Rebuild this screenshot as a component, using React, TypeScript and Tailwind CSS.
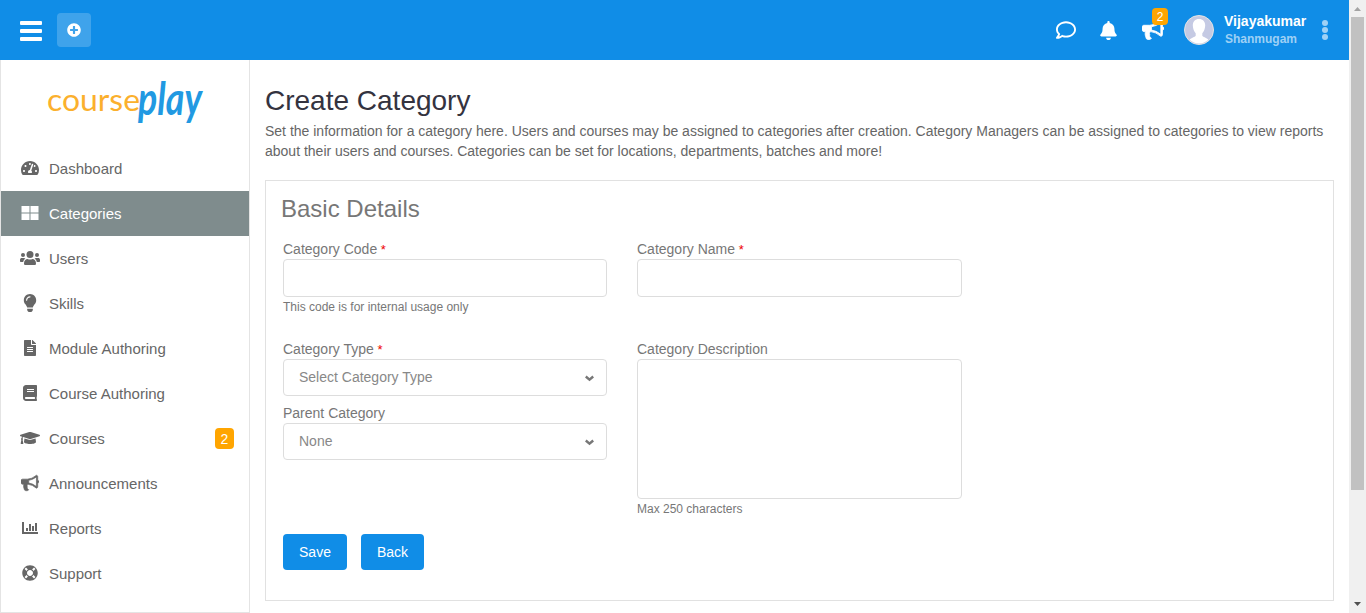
import type { ReactNode } from 'react';
import {
  FaPlusCircle, FaRegComment, FaBell, FaTachometerAlt, FaLightbulb,
  FaFileAlt, FaBook, FaGraduationCap, FaLifeRing,
} from 'react-icons/fa';

function Bullhorn({ size }: { size: number }) {
  return (
    <svg width={size} height={size} viewBox="0 0 1792 1792" fill="currentColor" stroke="currentColor" strokeWidth="70">
      <path d="M1664 640q53 0 90.5 37.5t37.5 90.5-37.5 90.5-90.5 37.5v384q0 52-38 90t-90 38q-417-347-812-380-58 19-91 66t-31 100.5 40 92.5q-20 33-23 65.500t6 58 33.500 55 48 50 61.500 50.500q-29 58-111.500 83t-168.500 11.500-132-55.500q-7-23-29.500-87.500t-32-94.500-23-89-15-101 3.500-98.500 22-110.500h-122q-66 0-113-47t-47-113v-192q0-66 47-113t113-47h480q435 0 896-384 52 0 90 38t38 90v384zm-128 604v-954q-394 302-768 343v270q377 42 768 341z" />
    </svg>
  );
}

function BarChart() {
  return (
    <svg width="18" height="16" viewBox="0 0 18 16" fill="currentColor">
      <path d="M1 2h2v10h14v2H1zM5 8h2v3H5zM8 4h2v7H8zM11 6h2v5h-2zM14 3h2v8h-2z" />
    </svg>
  );
}

function Windows() {
  return (
    <svg width="18" height="14" viewBox="0 0 18 14" fill="currentColor">
      <path d="M.5 0h8v6.500h-8zM9.500 0h8v6.500h-8zM.5 7.500h8V14h-8zM9.500 7.500h8V14h-8z" />
    </svg>
  );
}

function Users() {
  return (
    <svg width="20" height="14" viewBox="0 0 20 14" fill="currentColor">
      <circle cx="10" cy="3.500" r="3.500" />
      <circle cx="3" cy="4" r="2" />
      <circle cx="17" cy="4" r="2" />
      <path d="M4 12.500c0-2.800 1.600-4.500 3.600-4.500 1.500.8 3.300.8 4.800 0 2 0 3.600 1.700 3.600 4.500 0 1-.6 1.500-1.500 1.500h-9C4.600 14 4 13.500 4 12.500zM0 9c0-1.400.8-2 2-2h2c.6 0 1.100.2 1.400.5C4.200 8.200 3.400 9.500 3.200 11H1c-.6 0-1-.4-1-1zM20 9c0-1.400-.8-2-2-2h-2c-.6 0-1.100.2-1.400.5 1.200.7 2 2 2.200 3.500H19c.6 0 1-.4 1-1z" />
    </svg>
  );
}

const items: { label: string; icon: ReactNode; active?: boolean; badge?: string }[] = [
  { label: 'Dashboard', icon: <FaTachometerAlt size={18} /> },
  { label: 'Categories', icon: <Windows />, active: true },
  { label: 'Users', icon: <Users /> },
  { label: 'Skills', icon: <FaLightbulb size={18} /> },
  { label: 'Module Authoring', icon: <FaFileAlt size={16} /> },
  { label: 'Course Authoring', icon: <FaBook size={16} /> },
  { label: 'Courses', icon: <FaGraduationCap size={20} />, badge: '2' },
  { label: 'Announcements', icon: <Bullhorn size={18} /> },
  { label: 'Reports', icon: <BarChart /> },
  { label: 'Support', icon: <FaLifeRing size={16} /> },
];

function Header() {
  return (
    <header className="flex h-[60px] shrink-0 items-center bg-[#108de7] text-white">
      <button className="mt-0.5 ml-5 flex w-[22px] flex-col gap-1">
        <span className="h-1 rounded-[1px] bg-white" />
        <span className="h-1 rounded-[1px] bg-white" />
        <span className="h-1 rounded-[1px] bg-white" />
      </button>
      <button className="ml-[15px] flex size-[34px] items-center justify-center rounded bg-white/20">
        <FaPlusCircle size={14} />
      </button>
      <div className="ml-auto flex items-center">
        <FaRegComment size={20} />
        <FaBell size={19} className="ml-[23px]" />
        <div className="relative ml-6">
          <Bullhorn size={22} />
          <span className="absolute -top-[11px] left-[10px] flex h-[17px] w-4 items-center justify-center rounded bg-[#ffa500] text-xs">2</span>
        </div>
        <svg className="ml-5" width="30" height="30" viewBox="0 0 30 30">
          <circle cx="15" cy="15" r="14.500" fill="#c5cae3" stroke="#e4e4e4" />
          <path fill="#fff" d="M15 4c4 0 6.300 2.800 6.200 6.600-.1 3.300-1.300 6-2.900 7.600v2.600c.8 1.500 4.400 1.800 6.100 4A14 14 0 0 1 5.600 24.800c1.700-2.200 5.300-2.500 6.100-4v-2.600c-1.600-1.600-2.800-4.300-2.900-7.600C8.700 6.800 11 4 15 4z" />
        </svg>
        <div className="ml-2.5 w-[85px] font-bold">
          <div className="text-sm leading-[17px]">Vijayakumar</div>
          <div className="pl-px text-xs leading-[18px] text-white/60">Shanmugam</div>
        </div>
        <div className="mr-[21px] ml-[13px] flex flex-col gap-[1px]">
          <span className="size-1.5 rounded-full bg-white/60" />
          <span className="size-1.5 rounded-full bg-white/60" />
          <span className="size-1.5 rounded-full bg-white/60" />
        </div>
      </div>
    </header>
  );
}

function Sidebar() {
  return (
    <aside className="flex w-[250px] shrink-0 flex-col border border-t-0 border-[#e4e4e4]">
      <svg className="mt-[5px] ml-[39px] h-[71px] w-[175px] shrink-0 overflow-visible" viewBox="40 65 175 71">
        <text x="47" y="111" fontSize="31" textLength="93" lengthAdjust="spacingAndGlyphs" fill="#fbb02d" fontFamily="Lato, sans-serif">course</text>
        <text x="138" y="115" fontSize="45" textLength="64" lengthAdjust="spacingAndGlyphs" fill="#2199e2" fontWeight="700" fontStyle="italic" fontFamily="Lato, sans-serif">play</text>
      </svg>
      <nav className="mt-[10px] flex flex-col">
        {items.map((it) => (
          <a key={it.label} className={it.active ? 'flex h-[45px] items-center bg-[#7f8c8d] pr-[15px] pl-[19px] text-white' : 'flex h-[45px] items-center pr-[15px] pl-[19px] text-[#666]'}>
            <span className="mb-0.5 flex w-5 justify-center">{it.icon}</span>
            <span className="mt-0.5 ml-[9px] text-[15px]">{it.label}</span>
            {it.badge && <span className="ml-auto flex h-[21px] w-[19px] items-center justify-center rounded bg-[#ffa500] text-sm text-white">{it.badge}</span>}
          </a>
        ))}
      </nav>
    </aside>
  );
}

function Label({ children, required }: { children: string; required?: boolean }) {
  return (
    <div className="h-5 text-sm leading-5">
      {children}
      {required && <span className="text-[13px] text-[#e00]"> *</span>}
    </div>
  );
}

function Select({ value }: { value: string }) {
  return (
    <div className="flex h-[37px] items-center justify-between rounded border border-[#ddd] pr-3 pl-[15px] text-sm text-[#888]">
      <span className="mb-0.5">{value}</span>
      <svg className="mt-0.5" width="9" height="7" viewBox="0 0 9 7" fill="none" stroke="#777" strokeWidth="2.400"><path d="M.8 1.500l3.700 3.200 3.700-3.200" /></svg>
    </div>
  );
}

function Main() {
  return (
    <main className="flex-1 pt-[25px] pr-[15px] pl-[15px]">
      <h1 className="text-[28px] leading-8 text-[#34333f]">Create Category</h1>
      <p className="mt-1 text-sm leading-5 text-[#666]">
        Set the information for a category here. Users and courses may be assigned to categories after creation. Category Managers can be assigned to categories to view reports<br />about their users and courses. Categories can be set for locations, departments, batches and more!
      </p>
      <section className="mt-[19px] h-[421px] border border-[#e1e1e1] px-[17px] pt-[13px] text-[#777]">
        <h2 className="-ml-0.5 text-2xl leading-[30px]">Basic Details</h2>
        <div className="mt-[15px] grid w-[679px] grid-cols-[324px_325px] gap-x-[30px]">
          <div className="h-[100px]">
            <Label required>Category Code</Label>
            <input className="block h-[38px] w-full rounded border border-[#ddd]" />
            <div className="text-xs leading-5">This code is for internal usage only</div>
          </div>
          <div>
            <Label required>Category Name</Label>
            <input className="block h-[38px] w-full rounded border border-[#ddd]" />
          </div>
          <div>
            <Label required>Category Type</Label>
            <Select value="Select Category Type" />
            <div className="mt-[7px]">
              <Label>Parent Category</Label>
              <Select value="None" />
            </div>
          </div>
          <div>
            <Label>Category Description</Label>
            <textarea className="block h-[140px] w-full resize-none rounded border border-[#ddd]" />
            <div className="text-xs leading-5">Max 250 characters</div>
          </div>
        </div>
        <div className="mt-[15px] flex gap-3.5 text-sm text-white">
          <button className="h-9 w-16 rounded bg-[#108de7]">Save</button>
          <button className="h-9 w-[63px] rounded bg-[#108de7]">Back</button>
        </div>
      </section>
    </main>
  );
}

function Scrollbar() {
  return (
    <div className="flex w-[17px] shrink-0 flex-col items-center bg-[#f0f0f0]">
      <svg width="17" height="17"><path d="M8.500 7l3.500 4H5z" fill="#a3a3a3" /></svg>
      <div className="h-[473px] w-[13px] bg-[#c1c1c1]" />
      <svg className="mt-auto" width="17" height="17"><path d="M5 6h7L8.500 10z" fill="#505050" /></svg>
    </div>
  );
}

export default function App() {
  return (
    <div className="flex h-[613px] w-[1366px] overflow-hidden bg-white font-['Liberation_Sans',Arial,sans-serif]">
      <div className="flex min-w-0 flex-1 flex-col">
        <Header />
        <div className="flex min-h-0 flex-1">
          <Sidebar />
          <Main />
        </div>
      </div>
      <Scrollbar />
    </div>
  );
}
